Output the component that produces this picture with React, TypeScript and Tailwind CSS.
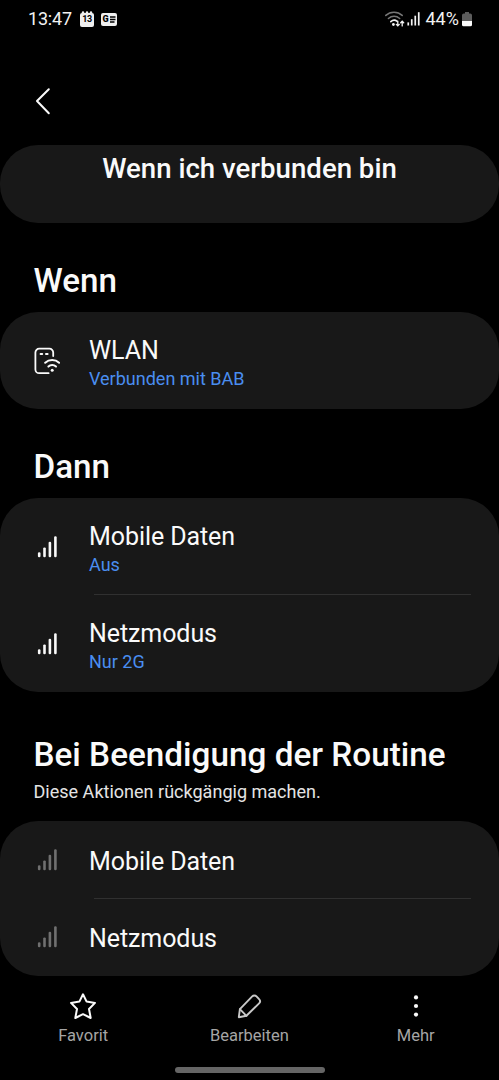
import type { ReactNode } from 'react';

interface Action {
  label: string;
  value?: string;
}

const THEN_ACTIONS: Action[] = [
  { label: 'Mobile Daten', value: 'Aus' },
  { label: 'Netzmodus', value: 'Nur 2G' },
];

const END_ACTIONS: Action[] = [{ label: 'Mobile Daten' }, { label: 'Netzmodus' }];

function SignalIcon({ className }: { className: string }) {
  return (
    <svg width="22" height="24" viewBox="0 0 22 24" fill="currentColor" className={className}>
      <rect x="0.9" y="17.2" width="2.6" height="5" rx="1.2" />
      <rect x="6.2" y="12.4" width="2.6" height="9.8" rx="1.2" />
      <rect x="11.6" y="6.7" width="2.6" height="15.5" rx="1.2" />
      <rect x="17.1" y="1.2" width="2.6" height="21" rx="1.2" />
    </svg>
  );
}

function PhoneWifiIcon() {
  return (
    <svg width="28" height="28" viewBox="0 0 28 28" fill="none" stroke="#fafafa" strokeWidth="1.8" strokeLinecap="round">
      <path d="M21.2 9.1V5.5a3.8 3.8 0 0 0-3.8-3.8H7.2a3.8 3.8 0 0 0-3.8 3.8v16.9a3.8 3.8 0 0 0 3.8 3.8h9.4" />
      <path d="M8.6 7.1h1.6M14 7.1h1.6" strokeWidth="2" />
      <path d="M13.2 15.8c3.9-3.6 10-3.6 13.9 0" strokeWidth="2" />
      <path d="M16.4 19.6c2.2-2 5.4-2 7.6 0" strokeWidth="2" />
      <circle cx="20.2" cy="23.3" r="1.5" fill="#fafafa" stroke="none" />
    </svg>
  );
}

function StatusBar() {
  return (
    <header className="flex h-[38px] items-center justify-between pl-[28px] pr-[27px] text-[#f2f2f2]">
      <div className="flex items-center">
        <span className="w-[52px] whitespace-nowrap text-[18px] leading-6 tracking-[-0.2px]">13:47</span>
        <span className="relative mt-px flex h-[14px] w-[14px] items-center justify-center rounded-[2px] bg-[#efefef] text-[9px] font-bold leading-none tracking-[-0.4px] text-black">
          <svg width="14" height="3" viewBox="0 0 14 3" className="absolute -top-[1.5px] left-0" fill="#efefef">
            <circle cx="3" cy="1.5" r="1.2" />
            <circle cx="7" cy="1.5" r="1.2" />
            <circle cx="11" cy="1.5" r="1.2" />
          </svg>
          13
        </span>
        <span className="ml-[7px] flex h-[13px] w-4 items-center justify-center gap-[1px] rounded-[2px] bg-[#efefef] text-[9px] font-black leading-none text-black">
          G
          <svg width="6" height="7" viewBox="0 0 6 7" stroke="#000" strokeWidth="1.3">
            <path d="M0 1h5.5M0 3.5h5.5M0 6h4.5" />
          </svg>
        </span>
      </div>
      <div className="flex items-center">
        <svg width="22" height="17" viewBox="0 0 22 17" fill="none" strokeLinecap="round" className="mt-px">
          <g stroke="#777" strokeWidth="1.5">
            <path d="M0.8 4.4c4.6-4.2 11.8-4.2 16.4 0" />
            <path d="M3.4 7.5c3.3-2.9 8-2.9 11.3 0" />
          </g>
          <path d="M5.8 10.6c1.9-1.7 4.6-1.7 6.4-.3" stroke="#f2f2f2" strokeWidth="1.6" />
          <circle cx="8.4" cy="13.5" r="1.4" fill="#f2f2f2" />
          <path d="M12.8 10.2v4.6M11.3 13.4l1.5 1.5 1.5-1.5M17.2 14.9v-4.6M15.7 11.7l1.5-1.5 1.5 1.5" stroke="#f2f2f2" strokeWidth="1.3" />
        </svg>
        <svg width="14" height="16" viewBox="0 0 14 16" fill="#f2f2f2">
          <rect x="0.4" y="11.4" width="1.7" height="3.1" />
          <rect x="3.9" y="8.2" width="1.7" height="6.3" />
          <rect x="7.4" y="4.7" width="1.7" height="9.8" />
          <rect x="10.9" y="1.2" width="1.7" height="13.3" />
        </svg>
        <span className="ml-[4.5px] w-[36.5px] whitespace-nowrap text-[18px] leading-6">44%</span>
        <svg width="10" height="15" viewBox="0 0 10 15">
          <path d="M3 0h4v1.5h1.2A1.8 1.8 0 0 1 10 3.3V9H0V3.3a1.8 1.8 0 0 1 1.8-1.8H3z" fill="#5c5c5c" />
          <path d="M0 9h10v3.7a1.6 1.6 0 0 1-1.6 1.6H1.6A1.6 1.6 0 0 1 0 12.7z" fill="#fafafa" />
        </svg>
      </div>
    </header>
  );
}

function Card({ children, className = '' }: { children: ReactNode; className?: string }) {
  return <div className={`rounded-[38px] bg-[#181818] ${className}`}>{children}</div>;
}

function Divider() {
  return <div className="-mt-px ml-[94px] mr-[28px] h-px bg-[#303030]" />;
}

function DetailRow({ icon, label, value }: { icon: ReactNode; label: string; value?: string }) {
  return (
    <div className="flex h-[97px] items-center">
      <div className="flex w-[89px] shrink-0 pl-[32px]">{icon}</div>
      <div className="pt-[5px]">
        <p className="text-[25px] leading-[30px] tracking-[-0.08px] text-[#fafafa]">{label}</p>
        <p className="mt-px text-[18px] leading-6 text-[#4a8ef0]">{value}</p>
      </div>
    </div>
  );
}

function NavItem({ icon, label }: { icon: ReactNode; label: string }) {
  return (
    <button className="flex w-[166.3px] flex-col items-center">
      <span className="flex h-[30px] items-center">{icon}</span>
      <span className="mt-[3px] text-[16.5px] leading-6 text-[#a5a5a5]">{label}</span>
    </button>
  );
}

export default function App() {
  return (
    <div className="flex h-[1080px] w-[499px] flex-col overflow-hidden bg-black font-['Roboto',sans-serif]">
      <StatusBar />

      <div className="h-[107px] pl-[34px] pt-[49px]">
        <svg width="18" height="28" viewBox="0 0 18 28" fill="none" stroke="#fafafa" strokeWidth="2" strokeLinecap="round" strokeLinejoin="round">
          <path d="M14.8 2.2 3 14l11.8 12.2" />
        </svg>
      </div>

      <Card className="h-[78px] pt-[8px] text-center">
        <h1 className="text-[27.6px] font-medium leading-8 text-[#fafafa]">Wenn ich verbunden bin</h1>
      </Card>

      <h2 className="mt-[38px] pl-[33.5px] text-[33.2px] font-medium leading-10 text-[#fafafa]">Wenn</h2>
      <Card className="mt-[11px]">
        <DetailRow icon={<PhoneWifiIcon />} label="WLAN" value="Verbunden mit BAB" />
      </Card>

      <h2 className="mt-[38px] pl-[33.5px] text-[33.2px] font-medium leading-10 text-[#fafafa]">Dann</h2>
      <Card className="mt-[11px]">
        {THEN_ACTIONS.map((action, i) => (
          <div key={action.label}>
            {i > 0 && <Divider />}
            <DetailRow
              icon={<SignalIcon className="ml-[5px] text-[#fafafa]" />}
              label={action.label}
              value={action.value}
            />
          </div>
        ))}
      </Card>

      <h2 className="mt-[43px] pl-[33.5px] text-[33.3px] font-medium leading-10 text-[#fafafa]">
        Bei Beendigung der Routine
      </h2>
      <p className="mt-[5px] pl-[33.5px] text-[18.05px] leading-6 text-[#e4e4e4]">
        Diese Aktionen rückgängig machen.
      </p>
      <Card className="mt-[17px]">
        {END_ACTIONS.map((action, i) => (
          <div key={action.label}>
            {i > 0 && <Divider />}
            <div className="flex h-[77.5px] items-center">
              <div className="w-[89px] shrink-0 pl-[37px]">
                <SignalIcon className="text-[#707070]" />
              </div>
              <p className="pt-[4px] text-[25px] leading-[30px] tracking-[-0.08px] text-[#fafafa]">{action.label}</p>
            </div>
          </div>
        ))}
      </Card>

      <nav className="mt-[15px] flex">
        <NavItem
          label="Favorit"
          icon={
            <svg width="28" height="28" viewBox="0 0 28 28" fill="none" stroke="#fafafa" strokeWidth="2" strokeLinejoin="round">
              <path d="M14 2.3 17.6 9.6 26 10.9 20 17 21.7 26 14 22.2 6.3 26 8 17 2 10.9 10.4 9.6z" />
            </svg>
          }
        />
        <NavItem
          label="Bearbeiten"
          icon={
            <svg width="26" height="26" viewBox="0 0 26 26" fill="none" stroke="#c8c8c8" strokeWidth="1.9" strokeLinecap="round" strokeLinejoin="round">
              <path d="M2.8 24.2 3.9 16.2 16.2 3.4a3 3 0 0 1 4.3 0l2.6 2.8a3 3 0 0 1 0 4.2L10.4 22.8z" />
              <path d="M3.9 16.2l6.5 6.6" />
            </svg>
          }
        />
        <NavItem
          label="Mehr"
          icon={
            <svg width="6" height="24" viewBox="0 0 6 24" fill="#fafafa">
              <circle cx="3" cy="3.4" r="2.1" />
              <circle cx="3" cy="12" r="2.1" />
              <circle cx="3" cy="20.6" r="2.1" />
            </svg>
          }
        />
      </nav>

      <div className="mx-auto mt-[19px] h-[6px] w-[150px] shrink-0 rounded-full bg-[#666]" />
    </div>
  );
}
